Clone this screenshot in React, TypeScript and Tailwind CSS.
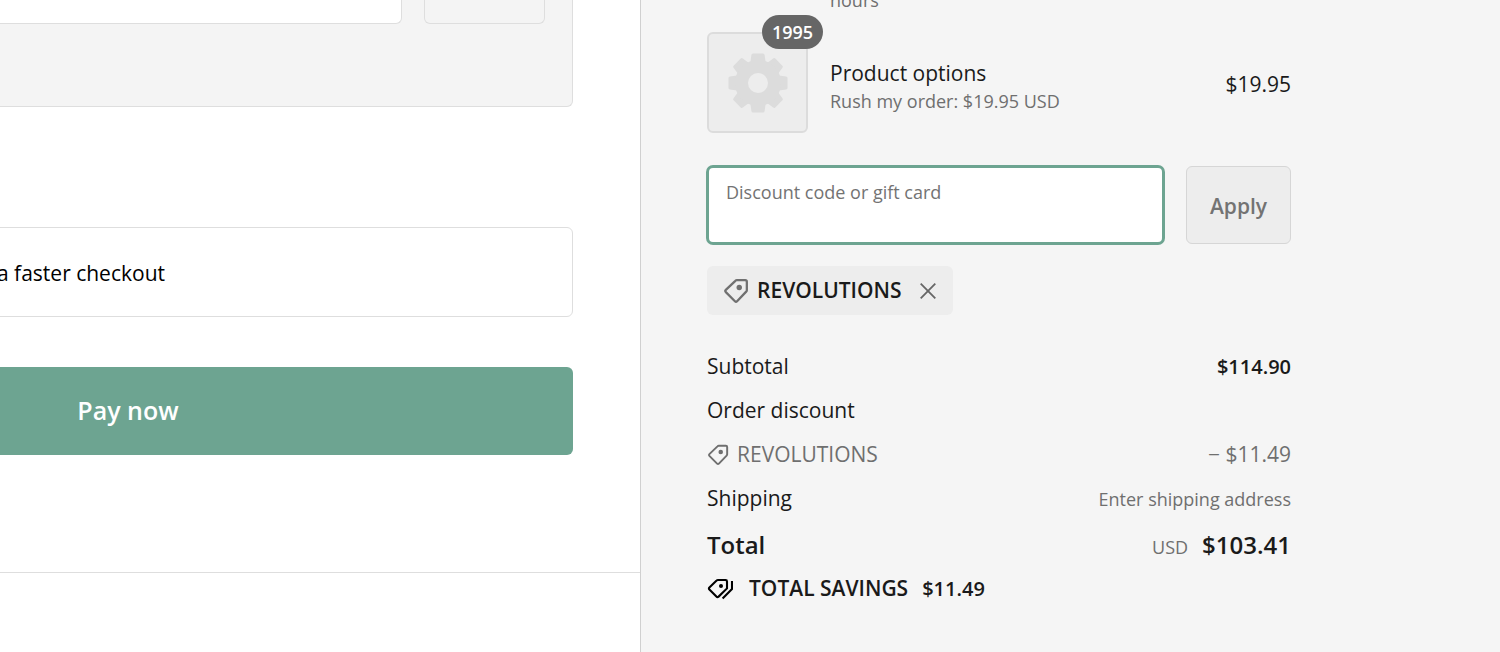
import type { ReactNode } from "react";

function TagIcon({ className }: { className: string }) {
  return (
    <svg viewBox="0 0 24 24" fill="none" className={className} aria-hidden="true">
      <path
        d="M12.8 2H20.6Q22 2 22 3.4V11.2Q22 12 21.4 12.6L13 21.4Q12 22.4 11 21.4L2.6 13Q1.6 12 2.6 11L11.4 2.6Q12 2 12.8 2Z"
        stroke="currentColor"
        strokeWidth="2.1"
      />
      <circle cx="15" cy="8.8" r="2.5" fill="currentColor" />
    </svg>
  );
}

function SavingsIcon() {
  return (
    <svg viewBox="0 0 26 22" fill="none" className="h-[22px] w-[26px] text-black" aria-hidden="true">
      <path
        d="M11 2H18.6Q20 2 20 3.4V10.4L11.6 18.6Q10.4 19.6 9.4 18.6L2.4 11.4Q1.4 10.4 2.4 9.4L9.6 2.6Q10.2 2 11 2Z"
        stroke="currentColor"
        strokeWidth="2.1"
      />
      <path d="M25 3V11L15.6 20.6" stroke="currentColor" strokeWidth="2.1" />
      <circle cx="14" cy="8" r="2" fill="currentColor" />
    </svg>
  );
}

function GearIcon() {
  const teeth = [0, 45, 90, 135, 180, 225, 270, 315];
  return (
    <svg viewBox="-30 -30 60 60" className="size-[60px] text-[#dcdcdc]" aria-hidden="true">
      {teeth.map((angle) => (
        <path
          key={angle}
          d="M-8 -18L-6.6 -28Q-6.4 -29.5 -5 -29.5H5Q6.4 -29.5 6.6 -28L8 -18Z"
          fill="currentColor"
          transform={`rotate(${angle})`}
        />
      ))}
      <circle r="16.5" fill="none" stroke="currentColor" strokeWidth="13" />
    </svg>
  );
}

function Row({ label, children }: { label: ReactNode; children?: ReactNode }) {
  return (
    <div className="flex h-11 items-center justify-between">
      <dt className="flex items-center">{label}</dt>
      <dd>{children}</dd>
    </div>
  );
}

function PaymentColumn() {
  return (
    <main className="overflow-hidden border-r border-[#d0d0d0] bg-white">
      <div className="-ml-[317px] pr-[67px]">
        <section className="flex h-[107px] items-start justify-end gap-[22px] rounded-b-md border border-t-0 border-[#dedede] bg-[#f4f4f4] pr-[27px]">
          <div className="h-6 grow rounded-b-md border border-t-0 border-[#dedede] bg-white" />
          <div className="h-6 w-[121px] rounded-b-md border border-t-0 border-[#dedede]" />
        </section>
        <section className="mt-[120px] flex h-[90px] items-center rounded-md border border-[#dedede] pt-1 pl-[313px]">
          <p className="text-black">a faster checkout</p>
        </section>
        <button
          type="button"
          className="mt-[50px] h-[88px] w-full rounded-md bg-[#6da491] text-[25px] font-semibold text-white"
        >
          Pay now
        </button>
      </div>
      <footer className="mt-[117px] border-t border-[#dedede]" />
    </main>
  );
}

function SummaryColumn() {
  return (
    <aside className="bg-[#f5f5f5] px-[66px]">
      <div className="max-w-[584px]">
        <p className="-mt-3 pl-[123px] text-[18px] leading-6 text-[#6f6f6f]">hours</p>

        <div className="mt-5 flex items-center">
          <div className="relative flex size-[101px] items-center justify-center rounded-md border-2 border-[#dcdcdc] bg-[#ededed]">
            <GearIcon />
            <span className="absolute -top-[19px] -right-[17px] flex h-[34px] w-[61px] items-center justify-center rounded-full bg-[#666666] text-[18px] font-semibold text-white">
              1995
            </span>
          </div>
          <div className="ml-[22px] grow pt-2">
            <p className="leading-7">Product options</p>
            <p className="text-[18px] leading-7 text-[#6f6f6f]">Rush my order: $19.95 USD</p>
          </div>
          <p className="pt-1">$19.95</p>
        </div>

        <form className="mt-[33px] flex gap-[22px]" onSubmit={(event) => event.preventDefault()}>
          <div className="flex h-[78px] grow flex-col rounded-md border-2 border-[#6da491] bg-white px-[17px] pt-3 ring-1 ring-[#6da491]">
            <label htmlFor="discount" className="text-[18px] leading-6 text-[#737373]">
              Discount code or gift card
            </label>
            <input id="discount" type="text" className="w-full leading-7 outline-none" />
          </div>
          <button
            type="submit"
            className="w-[105px] rounded-md border border-[#d6d6d6] bg-[#ededed] pt-1 font-semibold text-[#737373]"
          >
            Apply
          </button>
        </form>

        <div className="mt-[22px] flex h-[49px] w-fit items-center rounded-md bg-[#ededed] pr-[17px] pl-4">
          <TagIcon className="size-[26px] text-[#707070]" />
          <span className="ml-2 font-semibold">REVOLUTIONS</span>
          <button type="button" aria-label="Remove REVOLUTIONS" className="ml-[18px]">
            <svg viewBox="0 0 16 16" className="size-4 text-[#666666]" aria-hidden="true">
              <path d="M.7 .7L15.3 15.3M15.3 .7L.7 15.3" stroke="currentColor" strokeWidth="1.8" />
            </svg>
          </button>
        </div>

        <dl className="mt-[30px]">
          <Row label="Subtotal">
            <span className="text-[20px] font-semibold">$114.90</span>
          </Row>
          <Row label="Order discount" />
          <Row
            label={
              <span className="flex items-center gap-2 text-[#6f6f6f]">
                <TagIcon className="size-[22px]" />
                REVOLUTIONS
              </span>
            }
          >
            <span className="text-[#6f6f6f]">− $11.49</span>
          </Row>
          <Row label="Shipping">
            <span className="text-[18px] text-[#6f6f6f]">Enter shipping address</span>
          </Row>
          <div className="flex h-12 items-center justify-between text-[24px] font-semibold">
            <dt>Total</dt>
            <dd className="flex items-baseline gap-[14px]">
              <span className="text-[18px] font-normal text-[#6f6f6f]">USD</span>
              $103.41
            </dd>
          </div>
          <div className="flex h-10 items-center font-semibold">
            <dt className="flex items-center gap-4">
              <SavingsIcon />
              TOTAL SAVINGS
            </dt>
            <dd className="ml-[14px] text-[20px]">$11.49</dd>
          </div>
        </dl>
      </div>
    </aside>
  );
}

export default function App() {
  return (
    <div className="grid min-h-screen grid-cols-[641fr_859fr] font-['Open_Sans','Noto_Sans',sans-serif] text-[21px] text-[#1a1a1a]">
      <PaymentColumn />
      <SummaryColumn />
    </div>
  );
}
